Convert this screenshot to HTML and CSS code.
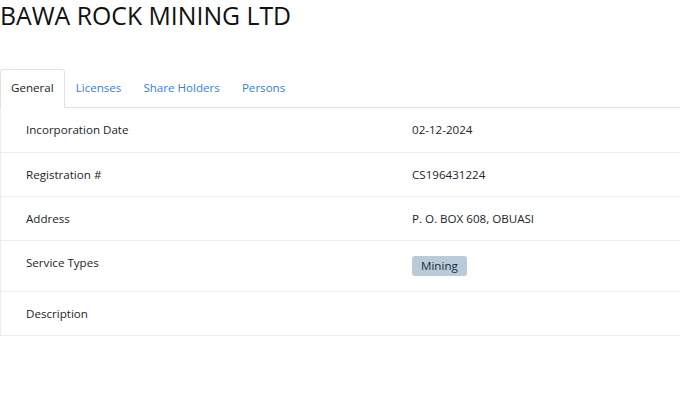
FILE: index.html
```html
<!DOCTYPE html>
<html>
<head>
<meta charset="utf-8">
<link rel="stylesheet" href="styles.css">
</head>
<body>
<h1 class="title">BAWA ROCK MINING LTD</h1>
<ul class="tabs">
  <li class="tab active">General</li>
  <li class="tab">Licenses</li>
  <li class="tab">Share Holders</li>
  <li class="tab">Persons</li>
</ul>
<table class="details">
  <tr class="first"><td class="label">Incorporation Date</td><td class="value">02-12-2024</td></tr>
  <tr><td class="label">Registration #</td><td class="value">CS196431224</td></tr>
  <tr><td class="label">Address</td><td class="value">P. O. BOX 608, OBUASI</td></tr>
  <tr><td class="label">Service Types</td><td class="value"><span class="badge">Mining</span></td></tr>
  <tr><td class="label">Description</td><td class="value"></td></tr>
</table>
</body>
</html>
```
FILE: styles.css
```css
html, body {
  margin: 0;
  padding: 0;
  background: #fff;
  font-family: "Open Sans", "Liberation Sans", sans-serif;
  color: #212529;
  width: 680px;
  overflow: hidden;
}
.title {
  margin: 0;
  padding: 0;
  font-size: 24.8px;
  font-weight: 400;
  line-height: 30px;
  color: #111;
}
.tabs {
  list-style: none;
  margin: 39px 0 0 0;
  padding: 0;
  display: flex;
  border-bottom: 1px solid #dee2e6;
}
.tab {
  font-size: 11.6px;
  line-height: 18px;
  padding: 9px 10px 10px 10px;
  border: 1px solid transparent;
  border-bottom: none;
  color: #3b7dd8;
  margin-bottom: -1px;
}
.tab.active {
  color: #222;
  border-color: #dee2e6;
  border-top-left-radius: 3px;
  border-top-right-radius: 3px;
  background: #fff;
  padding-bottom: 11px;
}
.details {
  border-collapse: collapse;
  width: 100%;
  border-left: 1px solid #eceef0;
  font-size: 11.6px;
}
.details td {
  border-bottom: 1px solid #eceef0;
  padding: 13px 25px 12px 25px;
  line-height: 18px;
  vertical-align: top;
}
.details .first td { padding-bottom: 13px; }
.label { width: 336px; }
.badge {
  display: inline-block;
  background: #b9cbd8;
  color: #1d2b36;
  border-radius: 3px;
  padding: 1px 9px;
  line-height: 18px;
  margin-top: 2px;
  margin-bottom: 3px;
}
```
